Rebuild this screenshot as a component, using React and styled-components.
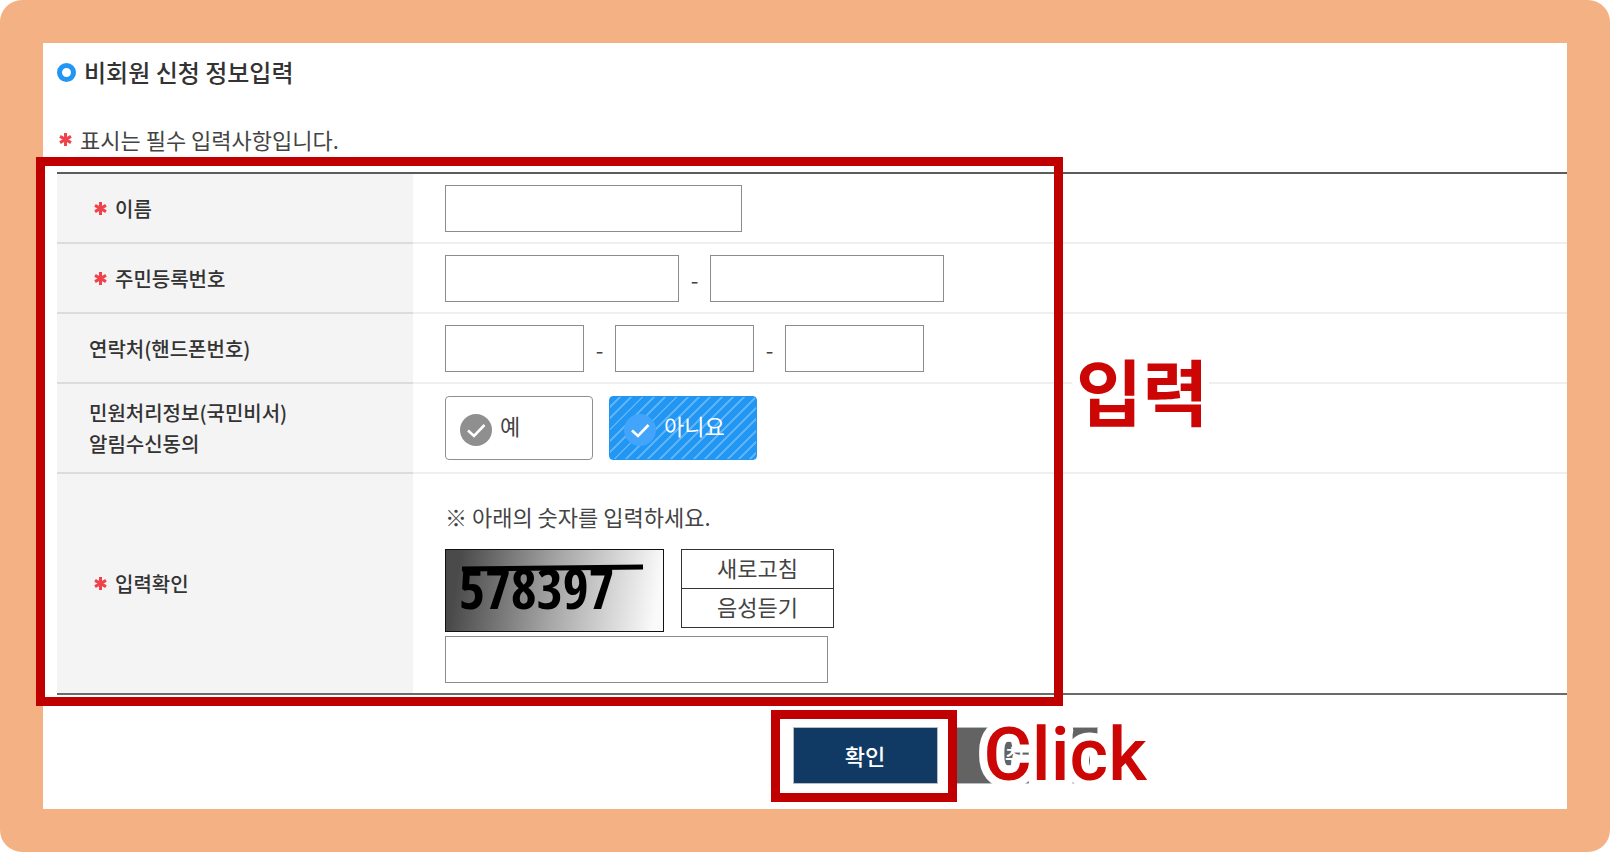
import React, { useState } from 'react'
import styled, { createGlobalStyle, css } from 'styled-components'

const GlobalStyle = createGlobalStyle`
  *, *::before {
    box-sizing: border-box;
  }
  body {
    margin: 0;
    background: #fff;
    color: #444;
    font-family: 'Noto Sans CJK KR', 'Noto Sans', sans-serif;
    font-size: 22px;
    line-height: 30px;
  }
  button, input {
    font: inherit;
    color: inherit;
  }
`

const Frame = styled.div`
  padding: 43px;
  border-radius: 22px;
  background: #f4b183;
`

const Panel = styled.main`
  padding: 12px 0 25px 14px;
  background: #fff;
`

const Title = styled.h1`
  display: flex;
  align-items: center;
  gap: 8px;
  margin: 0;
  font-size: 24px;
  font-weight: 500;
  line-height: 34px;
  color: #333;

  &::before {
    content: '';
    width: 19px;
    height: 19px;
    border: 5px solid #2196f3;
    border-radius: 50%;
  }
`

const Note = styled.p`
  display: flex;
  align-items: center;
  gap: 8px;
  margin: 35px 0 18px 2px;
`

const Star = styled.svg`
  flex: none;
  width: 13px;
  height: 13px;
  stroke: #ee434b;
  stroke-width: 3;
`

const FormArea = styled.section`
  position: relative;
`

const FormTable = styled.table`
  width: 100%;
  border-collapse: separate;
  border-spacing: 0;
  border-top: 2px solid #5c5c5c;
  border-bottom: 2px solid #6a6a6a;
`

const HeadCell = styled.th`
  width: 356px;
  padding: 0 0 0 ${props => (props.$required ? 37 : 32)}px;
  border-bottom: ${props => (props.$last ? 'none' : '2px solid #dcdcdc')};
  background: #f4f4f4;
  color: #333;
  font-size: 20px;
  font-weight: 500;
  line-height: 31px;
  text-align: left;
`

const HeadLabel = styled.div`
  display: flex;
  align-items: center;
  gap: 8px;
`

const Cell = styled.td`
  padding: ${props => props.$padding || '11px 0 10px 32px'};
  border-bottom: ${props => (props.$last ? 'none' : '2px solid #efefef')};
`

const Fields = styled.div`
  display: flex;
  align-items: center;
`

const Dash = styled.span`
  width: 31px;
  text-align: center;
`

const TextInput = styled.input`
  display: block;
  width: ${props => props.$width}px;
  height: 47px;
  padding: 0 10px;
  border: 1px solid #8c8c8c;
  border-radius: 0;
  background: #fff;
`

const Choices = styled.div`
  display: flex;
  gap: 16px;
`

const Choice = styled.label`
  display: flex;
  gap: 8px;
  width: 148px;
  height: 64px;
  padding: 13px 0 0 14px;
  border: 1px solid #8f8f8f;
  border-radius: 4px;
  cursor: pointer;

  ${props => props.$checked && css`
    border-color: #2196f3;
    color: #fff;
    background: repeating-linear-gradient(135deg, #2196f3 0 6px, #5db3f8 6px 8px);
  `}
`

const Radio = styled.input`
  position: absolute;
  opacity: 0;
`

const CheckIcon = styled.svg`
  width: 32px;
  height: 32px;
  margin-top: 4px;
  fill: ${props => (props.$checked ? '#42a5fb' : '#8f8f8f')};
`

const Guide = styled.p`
  margin: 0 0 18px;
`

const CaptchaRow = styled.div`
  display: flex;
  align-items: flex-start;
  gap: 17px;
  margin-bottom: 4px;
`

const Captcha = styled.svg`
  width: 219px;
  height: 83px;
  border: 1px solid #111;
`

const CaptchaButtons = styled.div`
  display: flex;
  flex-direction: column;
`

const SmallButton = styled.button`
  width: 153px;
  height: 40px;
  padding: 0 0 4px;
  border: 1px solid #333;
  background: #fff;
  line-height: 32px;

  & + & {
    margin-top: -1px;
  }
`

const Actions = styled.div`
  display: flex;
  justify-content: center;
  gap: 15px;
  margin-top: 32px;
  padding-left: 266px;
`

const ActionItem = styled.div`
  position: relative;
`

const ActionButton = styled.button`
  display: block;
  width: 145px;
  height: 57px;
  padding: 0 0 2px;
  border: 1px solid #b5bcc4;
  background: ${props => (props.$primary ? '#103a63' : '#636363')};
  color: #fff;
  font-weight: 500;
`

// red guide boxes and captions that lie over the form
const Highlight = styled.div`
  position: absolute;
  border: 9px solid #c00000;
  pointer-events: none;
`

const FormHighlight = styled(Highlight)`
  top: -15px;
  bottom: -11px;
  left: -21px;
  width: 1027px;
`

const ButtonHighlight = styled(Highlight)`
  inset: -17px -19px -18px -22px;
`

const Caption = styled.strong`
  position: absolute;
  z-index: 1;
  color: #cc0505;
  line-height: 1;
  white-space: nowrap;
  -webkit-text-stroke: 16px #fff;
  paint-order: stroke fill;
  pointer-events: none;
`

const InputCaption = styled(Caption)`
  top: 181px;
  left: 1019px;
  font-size: 72px;
  font-weight: 700;
`

const ClickCaption = styled(Caption)`
  top: -9px;
  left: 191px;
  font-family: Roboto, 'Liberation Sans', sans-serif;
  font-size: 74px;
  font-weight: 500;
`

const RequiredStar = () => (
  <Star viewBox='0 0 13 13' aria-hidden='true'>
    <path d='M6.5 0v13M1 3.4l11 6.2M12 3.4L1 9.6' />
  </Star>
)

const Row = ({ label, htmlFor, required, last, padding, children }) => (
  <tr>
    <HeadCell scope='row' $required={required} $last={last}>
      <HeadLabel>
        { required && <RequiredStar /> }
        { htmlFor ? <label htmlFor={htmlFor}>{ label }</label> : <span>{ label }</span> }
      </HeadLabel>
    </HeadCell>
    <Cell $last={last} $padding={padding}>{ children }</Cell>
  </tr>
)

const AgreeChoice = ({ text, checked, onChange }) => (
  <Choice $checked={checked}>
    <Radio type='radio' name='agree' checked={checked} onChange={onChange} />
    <CheckIcon $checked={checked} viewBox='0 0 32 32' aria-hidden='true'>
      <circle cx='16' cy='16' r='16' />
      <path d='M8 16.5l6 5.500L24.500 11' fill='none' stroke='#fff' strokeWidth='2.600' />
    </CheckIcon>
    { text }
  </Choice>
)

const App = () => {
  const [agree, setAgree] = useState('no')

  return (
    <Frame>
      <GlobalStyle />
      <Panel>
        <Title>비회원 신청 정보입력</Title>
        <Note><RequiredStar />표시는 필수 입력사항입니다.</Note>
        <FormArea>
          <FormTable>
            <tbody>
              <Row label='이름' htmlFor='name' required>
                <TextInput id='name' $width={297} />
              </Row>
              <Row label='주민등록번호' htmlFor='rrn1' required>
                <Fields>
                  <TextInput id='rrn1' $width={234} />
                  <Dash>-</Dash>
                  <TextInput type='password' aria-label='주민등록번호 뒷자리' $width={234} />
                </Fields>
              </Row>
              <Row label='연락처(핸드폰번호)' htmlFor='tel1'>
                <Fields>
                  <TextInput id='tel1' $width={139} />
                  <Dash>-</Dash>
                  <TextInput aria-label='연락처 가운데자리' $width={139} />
                  <Dash>-</Dash>
                  <TextInput aria-label='연락처 끝자리' $width={139} />
                </Fields>
              </Row>
              <Row
                label={<>민원처리정보(국민비서)<br />알림수신동의</>}
                padding='12px 0 12px 32px'
              >
                <Choices>
                  <AgreeChoice text='예' checked={agree === 'yes'} onChange={() => setAgree('yes')} />
                  <AgreeChoice text='아니요' checked={agree === 'no'} onChange={() => setAgree('no')} />
                </Choices>
              </Row>
              <Row label='입력확인' htmlFor='captcha' required last padding='27px 0 10px 32px'>
                <Guide>※ 아래의 숫자를 입력하세요.</Guide>
                <CaptchaRow>
                  <Captcha viewBox='0 0 217 81'>
                    <defs>
                      <linearGradient id='shade' gradientUnits='userSpaceOnUse' x1='10' y1='30' x2='210' y2='60'>
                        <stop offset='0' stopColor='#4a4a4a' />
                        <stop offset='0.5' stopColor='#a8a8a8' />
                        <stop offset='1' stopColor='#fafafa' />
                      </linearGradient>
                    </defs>
                    <rect width='217' height='81' fill='url(#shade)' />
                    <text
                      x='13'
                      y='59'
                      fontFamily="'Liberation Sans Narrow', 'Open Sans Condensed', 'DejaVu Sans Condensed', sans-serif"
                      fontSize='56'
                      fontWeight='700'
                    >
                      578397
                    </text>
                    <path d='M16 19L197 17' stroke='#000' strokeWidth='5' />
                  </Captcha>
                  <CaptchaButtons>
                    <SmallButton type='button'>새로고침</SmallButton>
                    <SmallButton type='button'>음성듣기</SmallButton>
                  </CaptchaButtons>
                </CaptchaRow>
                <TextInput id='captcha' $width={383} />
              </Row>
            </tbody>
          </FormTable>
          <FormHighlight />
          <InputCaption>입력</InputCaption>
        </FormArea>
        <Actions>
          <ActionItem>
            <ActionButton type='button' $primary>확인</ActionButton>
            <ButtonHighlight />
            <ClickCaption>Click</ClickCaption>
          </ActionItem>
          <ActionButton type='button'>취소</ActionButton>
        </Actions>
      </Panel>
    </Frame>
  )
}

export default App
